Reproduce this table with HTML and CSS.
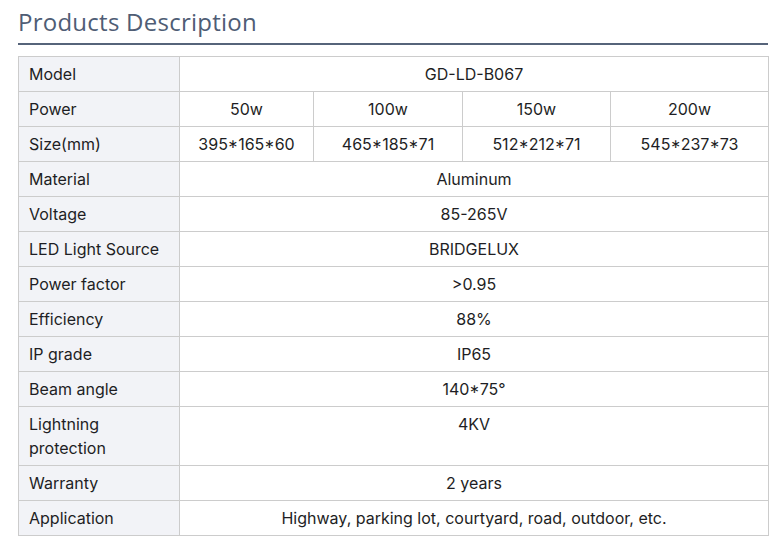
FILE: index.html
```html
<!DOCTYPE html>
<html>
<head>
<meta charset="utf-8">
<link rel="stylesheet" href="styles.css">
</head>
<body>
<section class="desc">
  <h2 class="desc-title">Products Description</h2>
  <table class="spec">
    <colgroup>
      <col class="c-label">
      <col class="c1"><col class="c2"><col class="c3"><col class="c4">
    </colgroup>
    <tbody>
      <tr><th>Model</th><td colspan="4">GD-LD-B067</td></tr>
      <tr><th>Power</th><td>50w</td><td>100w</td><td>150w</td><td>200w</td></tr>
      <tr><th>Size(mm)</th><td>395*165*60</td><td>465*185*71</td><td>512*212*71</td><td>545*237*73</td></tr>
      <tr><th>Material</th><td colspan="4">Aluminum</td></tr>
      <tr><th>Voltage</th><td colspan="4">85-265V</td></tr>
      <tr><th>LED Light Source</th><td colspan="4">BRIDGELUX</td></tr>
      <tr><th>Power factor</th><td colspan="4">&gt;0.95</td></tr>
      <tr><th>Efficiency</th><td colspan="4">88%</td></tr>
      <tr><th>IP grade</th><td colspan="4">IP65</td></tr>
      <tr><th>Beam angle</th><td colspan="4">140*75°</td></tr>
      <tr><th>Lightning<br>protection</th><td colspan="4">4KV</td></tr>
      <tr><th>Warranty</th><td colspan="4">2 years</td></tr>
      <tr><th>Application</th><td colspan="4">Highway, parking lot, courtyard, road, outdoor, etc.</td></tr>
    </tbody>
  </table>
</section>
</body>
</html>
```

FILE: styles.css
```css
html, body {
  margin: 0;
  padding: 0;
  background: #ffffff;
}

.desc {
  width: 750px;
  margin-left: 18px;
  padding-top: 6px;
}

.desc-title {
  margin: 0;
  font-family: "Open Sans", "Noto Sans", sans-serif;
  font-weight: 400;
  font-size: 24px;
  letter-spacing: 0.25px;
  line-height: 32px;
  color: #4f5d75;
  padding-bottom: 5px;
  border-bottom: 2px solid #56647a;
}

.spec {
  margin-top: 11px;
  width: 750px;
  border-collapse: collapse;
  table-layout: fixed;
  font-family: Inter, "Noto Sans", sans-serif;
  font-size: 16px;
  line-height: 24px;
  color: #1e1e24;
}

.c-label { width: 161px; }
.c1 { width: 134px; }
.c2 { width: 149px; }
.c3 { width: 148px; }
.c4 { width: 158px; }

.spec th,
.spec td {
  border: 1px solid #cccccc;
  padding: 5px 10px;
  vertical-align: top;
  font-weight: 400;
}

.spec th {
  text-align: left;
  background: #f2f3f7;
}

.spec td {
  text-align: center;
}
```
